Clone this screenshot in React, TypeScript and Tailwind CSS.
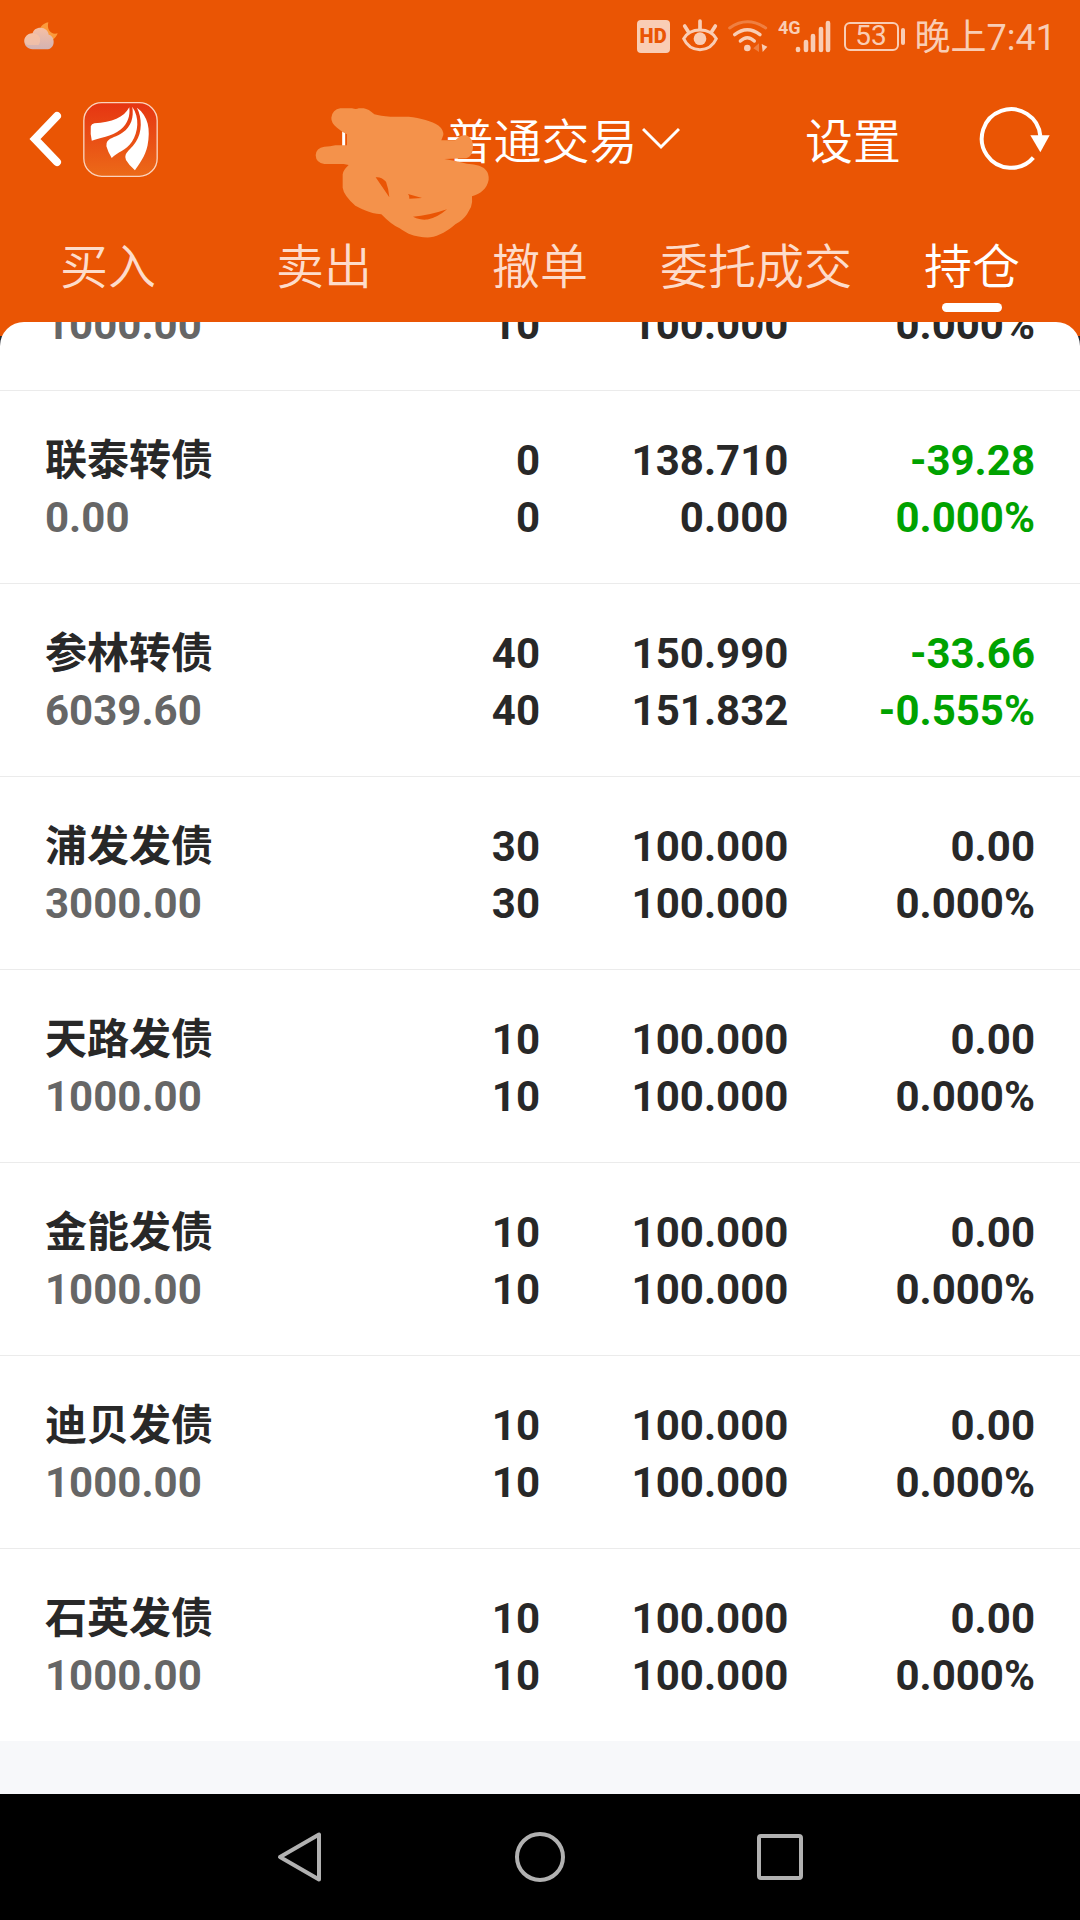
import type React from "react";

interface Holding {
  name: string;
  value: string;
  amount: string;
  available: string;
  price: string;
  cost: string;
  profit: string;
  rate: string;
}

const tabs = ["买入", "卖出", "撤单", "委托成交", "持仓"];

const newBond = (name: string, amount = "10", value = "1000.00"): Holding => ({
  name,
  value,
  amount,
  available: amount,
  price: "100.000",
  cost: "100.000",
  profit: "0.00",
  rate: "0.000%",
});

const holdings: Holding[] = [
  // first line of this row is scrolled away
  { ...newBond(""), amount: "", price: "", profit: "" },
  {
    name: "联泰转债",
    value: "0.00",
    amount: "0",
    available: "0",
    price: "138.710",
    cost: "0.000",
    profit: "-39.28",
    rate: "0.000%",
  },
  {
    name: "参林转债",
    value: "6039.60",
    amount: "40",
    available: "40",
    price: "150.990",
    cost: "151.832",
    profit: "-33.66",
    rate: "-0.555%",
  },
  newBond("浦发发债", "30", "3000.00"),
  newBond("天路发债"),
  newBond("金能发债"),
  newBond("迪贝发债"),
  newBond("石英发债"),
];

const WeatherIcon = () => (
  <svg width="34" height="28" viewBox="71 65 102 84" aria-hidden="true">
    <defs>
      <linearGradient id="cloud" x1="0" y1="0" x2="0" y2="1">
        <stop offset="0" stopColor="#f6bfa4" />
        <stop offset="1" stopColor="#d3b3b3" />
      </linearGradient>
    </defs>
    <path d="M144 66C126 70 116 82 118 96L155 119Q168 112 172 99C154 105 138 90 144 66Z" fill="#fb9a3c" />
    <path
      d="M97 147C82 147 72 136 72 123C72 109 83 99 97 99C98 89 108 82 120 82C134 82 144 91 145 103C154 105 160 113 160 124C160 138 151 147 138 147Z"
      fill="url(#cloud)"
    />
    <path d="M97 99Q113 100 119 113Q121 124 115 134H84Q72 131 72 121Q74 101 97 99Z" fill="#fcc4a4" opacity="0.6" />
  </svg>
);

const StatusBar = () => (
  <div className="flex h-18 items-center justify-between pr-6 pl-6 text-[#f9cdb5]">
    <WeatherIcon />
    <div className="flex items-center">
      <span className="flex h-[33px] w-[33px] items-center justify-center rounded-sm bg-[#f9cdb5] text-[20px] font-black text-[#ea5504]">
        HD
      </span>
      <svg className="ml-3" width="36" height="34" viewBox="183 60 108 102" fill="none" stroke="currentColor" aria-hidden="true">
        <path d="M188 119C208 84 266 84 286 119C266 163 208 163 188 119Z" strokeWidth="9" />
        <path d="M237 66V90M191 81L202 98M283 81L272 98" strokeWidth="11" strokeLinecap="round" />
        <circle cx="237" cy="119" r="19" fill="currentColor" stroke="none" />
      </svg>
      <svg className="ml-[10px]" width="40" height="34" viewBox="320 57 120 102" fill="none" stroke="currentColor" aria-hidden="true">
        <path d="M325 84Q378 47 433 84" strokeWidth="9" strokeLinecap="round" opacity="0.35" />
        <path d="M340 104Q378 74 416 104" strokeWidth="10" strokeLinecap="round" />
        <path d="M357 123Q378 103 399 123" strokeWidth="10" strokeLinecap="round" />
        <circle cx="378" cy="144" r="10" fill="currentColor" stroke="none" />
        <path d="M413 130V156L396 145Z" fill="currentColor" stroke="none" opacity="0.35" />
        <path d="M421 132L438 140L424 156Z" fill="currentColor" stroke="none" />
      </svg>
      <svg className="ml-[10px]" width="54" height="36" viewBox="0 0 54 36" aria-hidden="true">
        <text x="0" y="16" fontSize="18" fontWeight="700" fontFamily="Roboto, sans-serif" fill="currentColor">
          4G
        </text>
        <path d="M20 31V32M28 24V32M35 18V32M43 11V32M50 5V32" stroke="currentColor" strokeWidth="4.6" strokeLinecap="round" />
      </svg>
      <span className="ml-3 flex h-[29px] w-[55px] items-center justify-center rounded-md border-2 border-current text-[28px] leading-none">
        53
      </span>
      <span className="ml-[2px] h-[17px] w-1 rounded-full bg-current" />
      <span className="ml-[10px] pt-1 text-[36px] leading-none">晚上7:41</span>
    </div>
  </div>
);

const BrandLogo = () => (
  <svg width="75" height="75" viewBox="249 305 225 226" aria-hidden="true">
    <defs>
      <linearGradient id="brand" x1="0" y1="0" x2="0" y2="1">
        <stop offset="0" stopColor="#e63512" />
        <stop offset="1" stopColor="#ec6a18" />
      </linearGradient>
    </defs>
    <rect x="251" y="307" width="221" height="222" rx="54" fill="url(#brand)" stroke="#fbd3bd" strokeWidth="4" />
    <g fill="#fff">
      <path d="M388 321C372 352 336 366 283 369Q274 370 272 378Q270 400 275 422C298 412 334 411 362 388C384 370 391 347 388 321Z" />
      <path d="M397 319C402 352 394 378 368 397C350 410 332 412 322 423Q318 428 319 438Q324 456 335 474C352 456 378 452 396 425C415 395 420 352 397 319Z" />
      <path d="M411 322C427 352 427 396 408 425C395 445 384 450 377 464Q374 472 378 480Q388 497 405 511C417 492 436 470 443 436C452 388 446 347 411 322Z" />
    </g>
  </svg>
);

/* Brush strokes that cover the account number */
const Scribble = () => (
  <svg
    className="pointer-events-none absolute top-0 -left-[26px]"
    width="176"
    height="132"
    viewBox="44 50 528 396"
    aria-hidden="true"
  >
    <path d="M130 120V170" stroke="#fff" strokeWidth="9" />
    <path
      fill="#f4924b"
      d="M120 54H155Q168 58 175 54H190Q205 56 222 72Q240 77 270 79H325C360 83 395 92 415 106Q430 118 429 134L423 150H465C475 138 487 133 498 135Q519 143 518 172Q516 198 498 204L432 206Q465 211 500 220Q545 222 557 240Q566 250 565 268C560 296 540 310 515 318Q517 335 512 350L500 372Q488 390 465 402C445 420 415 438 390 441Q360 443 325 430Q305 420 298 414Q275 405 243 372C205 368 180 354 165 346Q130 315 127 292V252Q128 240 145 224L130 221H72Q47 218 46 195Q47 172 72 169Q90 169 105 165H140V132Q125 125 110 112Q92 98 93 82Q96 58 120 54Z"
    />
    <path
      fill="#ea5504"
      d="M226 261L267 321Q265 295 257 274Q241 258 226 261ZM323 311L365 323L327 325Q329 318 323 311ZM338 379C360 390 378 389 387 386Q413 380 440 357Q385 376 338 379Z"
    />
  </svg>
);

const Header = () => (
  <header className="bg-[#ea5504] text-white">
    <StatusBar />
    <div className="flex h-[134px] items-center pr-[30px] pl-[29px]">
      <button type="button" aria-label="返回" className="shrink-0">
        <svg width="34" height="56" viewBox="0 0 34 56" fill="none" stroke="#fff" strokeWidth="8" strokeLinecap="round">
          <path d="M28 5L6 28L28 51" />
        </svg>
      </button>
      <a href="#" aria-label="首页" className="ml-5 shrink-0">
        <BrandLogo />
      </a>
      <div className="flex flex-1 justify-center pl-[58px]">
        <button type="button" className="relative flex items-center text-[48px] leading-[56px] font-[350]">
          <span className="pt-2 pl-[104px]">普通交易</span>
          <svg className="ml-1" width="38" height="24" viewBox="0 0 38 24" fill="none" stroke="#fff" strokeWidth="3">
            <path d="M1 2L19 20L37 2" />
          </svg>
          <Scribble />
        </button>
      </div>
      <button type="button" className="shrink-0 pt-2 text-[48px] leading-[56px] font-[350]">
        设置
      </button>
      <button type="button" aria-label="刷新" className="ml-[78px] shrink-0">
        <svg width="71" height="66" viewBox="657 80 213 198" fill="none" stroke="#fff" strokeWidth="12">
          <path d="M820 235A88 88 0 1 1 841 170" />
          <path d="M811 168H869L841 219Z" fill="#fff" stroke="none" />
        </svg>
      </button>
    </div>
    <nav className="grid grid-cols-5 pt-[34px] pb-[10px]">
      {tabs.map((tab) => {
        const active = tab === "持仓";
        return (
          <button
            key={tab}
            type="button"
            className={`flex flex-col items-center gap-[7px] text-[48px] leading-[56px] font-[350] ${
              active ? "text-white" : "text-[#fddccb]"
            }`}
          >
            {tab}
            <span className={`h-[9px] w-15 rounded-full ${active ? "bg-white" : ""}`} />
          </button>
        );
      })}
    </nav>
  </header>
);

interface CellProps {
  top: string;
  bottom: string;
  className?: string;
  bottomClassName?: string;
}

const Cell: React.FC<CellProps> = ({ top, bottom, className = "", bottomClassName = "" }) => (
  <td className={`pt-[41px] pb-[37px] ${className}`}>
    <div className="h-[57px]">{top}</div>
    <div className={`h-[57px] ${bottomClassName}`}>{bottom}</div>
  </td>
);

const HoldingRow: React.FC<{ item: Holding }> = ({ item }) => {
  const loss = item.profit.startsWith("-");
  return (
    <tr className="border-b border-[#ebebeb] last:border-b-0">
      <Cell top={item.name} bottom={item.value} className="pl-[45px]" bottomClassName="text-[#666666]" />
      <Cell top={item.amount} bottom={item.available} className="text-right" />
      <Cell top={item.price} bottom={item.cost} className="text-right" />
      <Cell
        top={item.profit}
        bottom={item.rate}
        className={`pr-[45px] text-right ${loss ? "text-[#00a200]" : ""}`}
      />
    </tr>
  );
};

const NavigationBar = () => (
  <div className="bg-black py-[37px]">
    <div className="mx-auto grid w-2/3 grid-cols-3 justify-items-center">
      <button type="button" aria-label="返回键">
        <svg width="52" height="52" viewBox="0 0 52 52" fill="none" stroke="#b1b1b1" strokeWidth="4" strokeLinejoin="round">
          <path d="M45 3.5V48.5L6 26Z" />
        </svg>
      </button>
      <button type="button" aria-label="主屏幕">
        <svg width="52" height="52" viewBox="0 0 52 52" fill="none" stroke="#b1b1b1" strokeWidth="4">
          <circle cx="26" cy="26" r="23" />
        </svg>
      </button>
      <button type="button" aria-label="最近任务">
        <svg width="52" height="52" viewBox="0 0 52 52" fill="none" stroke="#b1b1b1" strokeWidth="4">
          <rect x="5" y="5" width="42" height="42" rx="2" />
        </svg>
      </button>
    </div>
  </div>
);

export default function App() {
  return (
    <div className="flex min-h-screen flex-col bg-[#f7f8fa] font-['Roboto','Noto_Sans_CJK_SC',sans-serif]">
      <Header />
      <main className="flex-1">
        <div className="bg-[linear-gradient(#ea5504_14px,#23262e_14px,#23262e_40px,transparent_40px)]">
          <div className="overflow-hidden rounded-t-3xl bg-white">
            {/* list is scrolled, first row is only partly visible */}
            <table className="-mt-[124px] w-full table-fixed text-[42px] leading-[57px] font-bold text-[#282828]">
              <colgroup>
                <col className="w-[33%]" />
                <col className="w-[17%]" />
                <col className="w-[23%]" />
                <col className="w-[27%]" />
              </colgroup>
              <tbody>
                {holdings.map((item, i) => (
                  <HoldingRow key={i} item={item} />
                ))}
              </tbody>
            </table>
          </div>
        </div>
      </main>
      <NavigationBar />
    </div>
  );
}
